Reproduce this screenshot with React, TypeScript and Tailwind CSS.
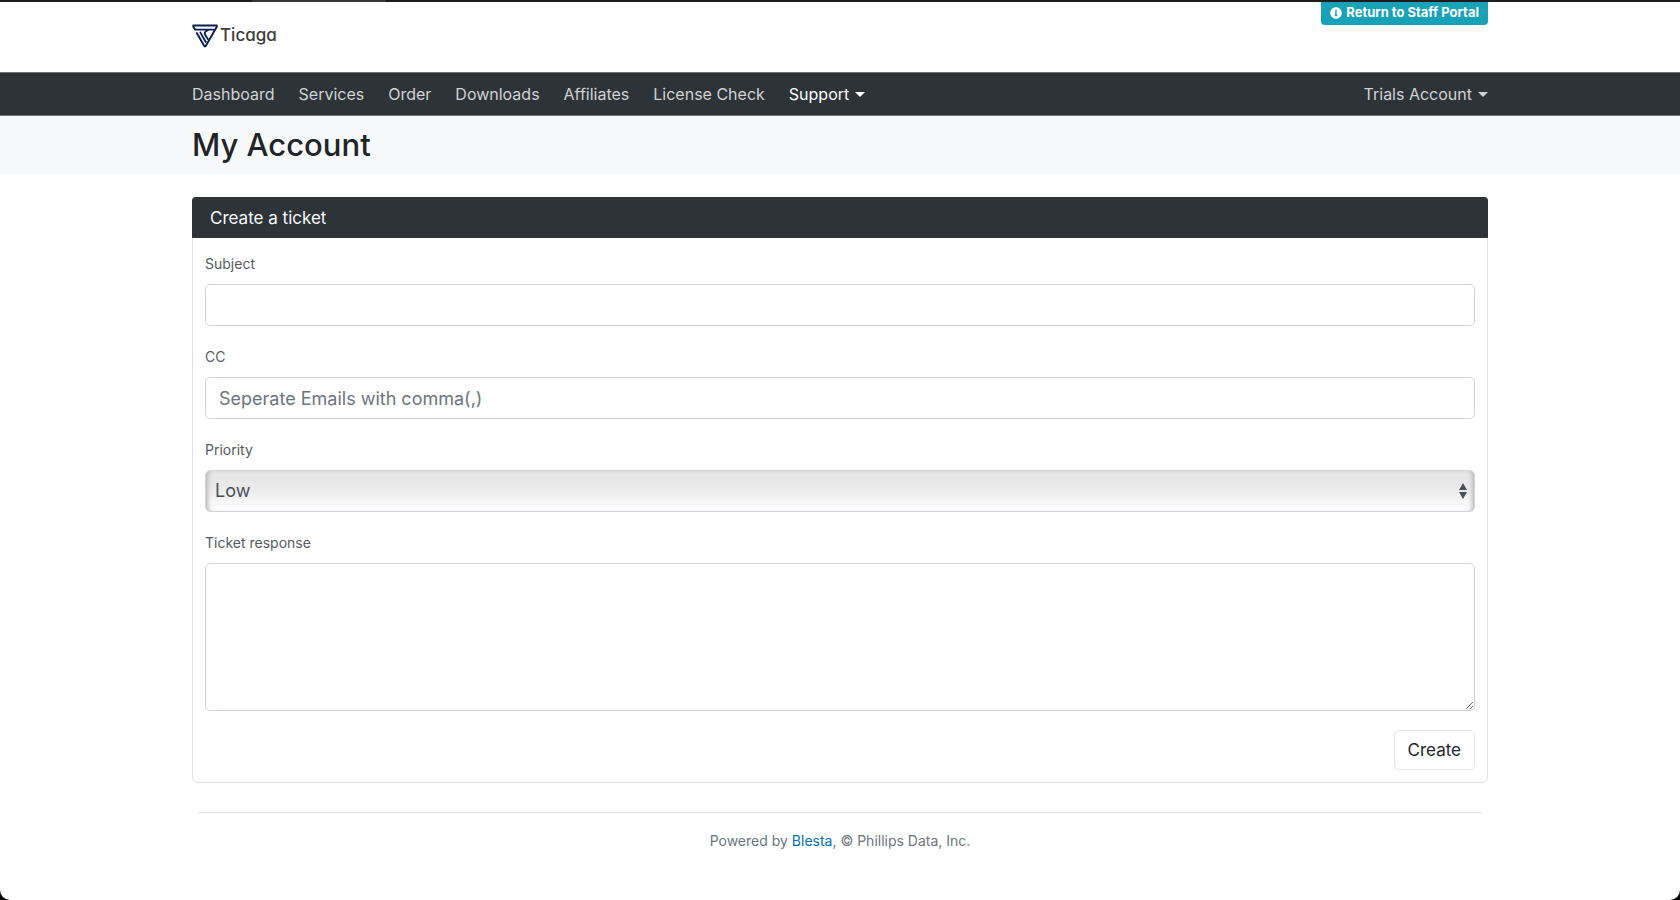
import { useState } from "react";
import { FaInfoCircle } from "react-icons/fa";

const navLinks = [
  "Dashboard",
  "Services",
  "Order",
  "Downloads",
  "Affiliates",
  "License Check",
];

const field =
  "block w-full rounded-[5px] border border-[#ced4da] bg-white px-[13px] text-lg text-[#495057] placeholder:text-[#6c757d] focus:outline-none focus:ring-2 focus:ring-sky-200";

const fieldLabel = "mb-2 block text-sm leading-6 text-[#545b62]";

function Caret() {
  return (
    <span className="ml-[6px] inline-block border-x-[5px] border-t-[5px] border-x-transparent align-[3px]" />
  );
}

function Logo() {
  return (
    <a href="#" className="flex items-center gap-[2px] text-[#3c3c3b]">
      <svg
        className="h-6 w-[26px]"
        viewBox="0 0 26 24"
        fill="none"
        stroke="#0a1f52"
        strokeWidth={1.9}
        strokeLinejoin="round"
        strokeLinecap="round"
      >
        <path d="M22.6 5.6H3.2L1.2 2.8V1.5H24.8V2.8L13.6 22.3H12.4L4.8 9" />
        <path d="M8.4 8.6L13.8 18" />
        <path d="M15.6 6.4C12.6 7.4 12.2 9.4 13.4 11.2L16 15.2" />
      </svg>
      <span className="text-[17px] font-medium [font-feature-settings:'cv11']">
        Ticaga
      </span>
    </a>
  );
}

export default function App() {
  const [priority, setPriority] = useState("Low");

  return (
    <div className="min-h-screen bg-black font-[Inter,sans-serif] text-[#212529]">
      <div className="flex h-[2px] bg-[#1f1c1d]">
        <div className="ml-[15%] w-[8%] bg-[#3a3738]" />
      </div>
      <div className="min-h-[calc(100vh-2px)] rounded-b-[10px] bg-white">
        <header className="mx-auto flex h-[70px] w-full max-w-[1296px] items-start justify-between">
          <div className="pt-[21px]">
            <Logo />
          </div>
          <a
            href="#"
            className="flex h-[23px] items-center gap-1 rounded-b-[4px] bg-[#17a2b8] px-[9px] pb-[2px] text-[13px] font-bold text-white"
          >
            <FaInfoCircle className="h-3 w-3" />
            Return to Staff Portal
          </a>
        </header>

        <nav className="border-y border-[#6d7173] bg-[#2e3338]">
          <div className="mx-auto flex h-[42px] max-w-[1296px] items-center justify-between text-base text-[#d0d2d3]">
            <div className="flex items-center gap-6">
              {navLinks.map((link) => (
                <a key={link} href="#" className="hover:text-white">
                  {link}
                </a>
              ))}
              <button type="button" className="text-white">
                Support
                <Caret />
              </button>
            </div>
            <button type="button" className="hover:text-white">
              Trials Account
              <Caret />
            </button>
          </div>
        </nav>

        <div className="bg-[#f8f9fb]">
          <h1 className="mx-auto flex h-[58px] max-w-[1296px] items-center pt-px text-[31px] font-medium">
            My Account
          </h1>
        </div>

        <main className="mx-auto mt-[23px] max-w-[1296px]">
          <section className="rounded-[5px] border border-[#dfe3e7]">
            <h2 className="-mx-px -mt-px flex h-[41px] items-center rounded-t-[4px] bg-[#2e3338] px-[18px] pt-[2px] text-[17px] text-[#f8f9fa]">
              Create a ticket
            </h2>
            <form
              className="flex flex-col gap-[19px] px-3 pt-[14px] pb-3"
              onSubmit={(e) => e.preventDefault()}
            >
              <div>
                <label htmlFor="subject" className={fieldLabel}>
                  Subject
                </label>
                <input id="subject" type="text" className={`${field} h-[42px]`} />
              </div>

              <div>
                <label htmlFor="cc" className={fieldLabel}>
                  CC
                </label>
                <input
                  id="cc"
                  type="text"
                  placeholder="Seperate Emails with comma(,)"
                  className={`${field} h-[42px]`}
                />
              </div>

              <div>
                <label htmlFor="priority" className={fieldLabel}>
                  Priority
                </label>
                <div className="relative">
                  <select
                    id="priority"
                    value={priority}
                    onChange={(e) => setPriority(e.target.value)}
                    className="block h-[42px] w-full appearance-none rounded-[5px] border border-[#ced4da] bg-linear-to-b from-[#e4e4e4] via-[#ececec] to-white px-[9px] text-lg text-[#495057] shadow-[inset_5px_0_4px_-3px_#bbbbbb,inset_-5px_0_4px_-3px_#bbbbbb]"
                  >
                    <option>Low</option>
                    <option>Medium</option>
                    <option>High</option>
                    <option>Critical</option>
                  </select>
                  <svg
                    className="pointer-events-none absolute top-[13px] right-2 h-4 w-2"
                    viewBox="0 0 8 16"
                    fill="#495057"
                  >
                    <path d="M4 0L8 7H0zM4 16L0 9H8z" />
                  </svg>
                </div>
              </div>

              <div>
                <label htmlFor="response" className={fieldLabel}>
                  Ticket response
                </label>
                <textarea id="response" className={`${field} h-[148px]`} />
              </div>

              <button
                type="submit"
                className="h-10 self-end rounded-[5px] border border-[#e4e7ea] bg-white px-[13px] pt-[2px] text-[17px] hover:bg-gray-100"
              >
                Create
              </button>
            </form>
          </section>

          <footer className="mx-[6px] mt-[29px] border-t border-[#e3e3e3] pt-[18px] text-center text-sm leading-5 text-[#6c757d]">
            Powered by{" "}
            <a href="#" className="text-[#0074b7] hover:underline">
              Blesta
            </a>
            , © Phillips Data, Inc.
          </footer>
        </main>
      </div>
    </div>
  );
}
